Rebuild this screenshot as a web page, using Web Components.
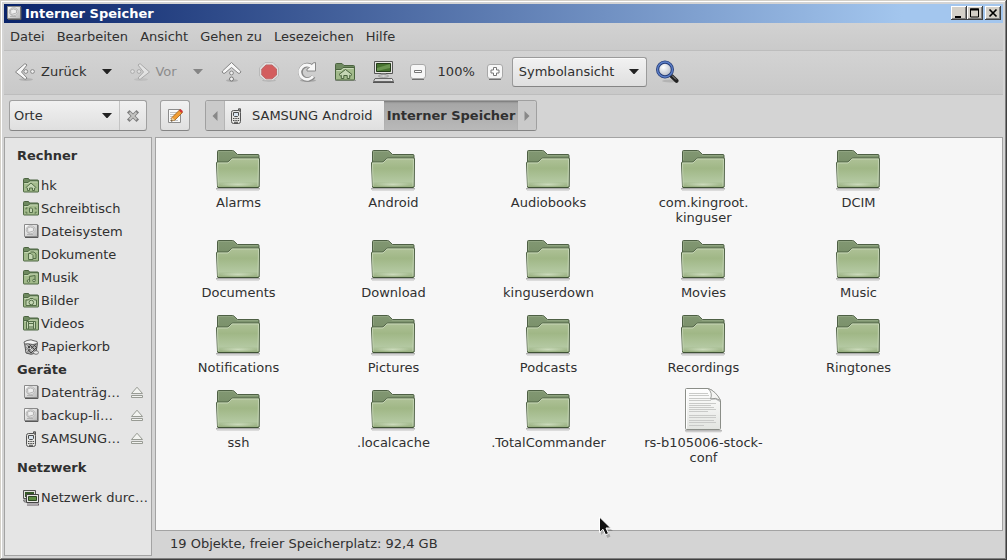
<!DOCTYPE html>
<html lang="de">
<head>
<meta charset="utf-8">
<title>Interner Speicher</title>
<style>
  body { margin: 0; font: 13px/15px "DejaVu Sans", sans-serif; color: #303030; background: #d4d4d4; }
</style>
</head>
<body>
<file-window>
  <title-bar slot="title">Interner Speicher</title-bar>
  <menu-bar slot="bars">
    <menu-entry>Datei</menu-entry><menu-entry>Bearbeiten</menu-entry><menu-entry>Ansicht</menu-entry><menu-entry>Gehen zu</menu-entry><menu-entry>Lesezeichen</menu-entry><menu-entry>Hilfe</menu-entry>
  </menu-bar>
  <tool-bar slot="bars"></tool-bar>
  <location-bar slot="bars"></location-bar>
  <side-pane slot="side">
    <side-heading class="after">Rechner</side-heading>
    <side-item icon="f-home">hk</side-item>
    <side-item icon="f-desk">Schreibtisch</side-item>
    <side-item icon="disk">Dateisystem</side-item>
    <side-item icon="f-docs">Dokumente</side-item>
    <side-item icon="f-music">Musik</side-item>
    <side-item icon="f-pics">Bilder</side-item>
    <side-item icon="f-video">Videos</side-item>
    <side-item icon="trash">Papierkorb</side-item>
    <side-heading>Geräte</side-heading>
    <side-item icon="disk" ejectable>Datenträg…</side-item>
    <side-item icon="disk" ejectable>backup-li…</side-item>
    <side-item icon="phone" ejectable>SAMSUNG…</side-item>
    <side-heading class="before after">Netzwerk</side-heading>
    <side-item icon="network">Netzwerk durc…</side-item>
  </side-pane>
  <icon-view slot="view">
    <file-item>Alarms</file-item>
    <file-item>Android</file-item>
    <file-item>Audiobooks</file-item>
    <file-item>com.kingroot.<br>kinguser</file-item>
    <file-item>DCIM</file-item>
    <file-item>Documents</file-item>
    <file-item>Download</file-item>
    <file-item>kinguserdown</file-item>
    <file-item>Movies</file-item>
    <file-item>Music</file-item>
    <file-item>Notifications</file-item>
    <file-item>Pictures</file-item>
    <file-item>Podcasts</file-item>
    <file-item>Recordings</file-item>
    <file-item>Ringtones</file-item>
    <file-item>ssh</file-item>
    <file-item>.localcache</file-item>
    <file-item>.TotalCommander</file-item>
    <file-item icon="document">rs-b105006-stock-<br>conf</file-item>
  </icon-view>
  <status-bar slot="status">19 Objekte, freier Speicherplatz: 92,4 GB</status-bar>
  <mouse-pointer slot="overlay"></mouse-pointer>
</file-window>

<script>
const define = (name, html, setup) => {
  const template = document.createElement('template');
  template.innerHTML = html;
  customElements.define(name, class extends HTMLElement {
    constructor() {
      super();
      this.attachShadow({ mode: 'open' }).append(template.content.cloneNode(true));
    }
    connectedCallback() { if (setup) setup(this, this.shadowRoot); }
  });
};

/* Icon set: [width, height, markup, viewBox x, viewBox y] */
const small = (emblem) => [16, 16, `
  <path d="M.5 14V2.500q0-1 1-1L5.500 1.500l1 1.500H14.500q1 0 1 1V14.500H1z" fill="#6f8a60" stroke="#4b6340"/>
  <path d="M.5 5.500H5l1.500-1.500h9V14.500q0 .5-.5 .5H1q-.5 0-.5-.5z" fill="#a3bb8c" stroke="#4f6944"/>
  <path d="M1.500 6.500H5.500L7 5h7.500" fill="none" stroke="#c5d6b4"/>
  <g fill="#c4d6b3" stroke="#556f49" stroke-width="1">${emblem}</g>`, 0, 1];
const ICONS = {
  folder: [48, 48, `
    <defs><linearGradient id="a" x2="0" y2="1"><stop stop-color="#afc298"/><stop offset=".35" stop-color="#a0b786"/><stop offset=".8" stop-color="#b3c8a1"/><stop offset="1" stop-color="#96ad7d"/></linearGradient>
    <linearGradient id="b" x2="0" y2="1"><stop stop-color="#829873"/><stop offset="1" stop-color="#6b8159"/></linearGradient>
    <radialGradient id="c"><stop stop-color="#dce8cf"/><stop offset="1" stop-color="#dce8cf" stop-opacity="0"/></radialGradient></defs>
    <path d="M2 41h44v1.500H2z" fill="#000" opacity=".3"/><path d="M3 43.500h42" stroke="#000" opacity=".1"/>
    <path d="M3.500 40V4.500q0-1 1-1H18.500q1 0 1.500 .7L23.500 7.500H44q1 0 1 1V40z" fill="url(#b)" stroke="#4e6045"/>
    <path d="M4.500 13V4.500H19L23 8.500H44" fill="none" stroke="#93a884" opacity=".8"/>
    <path d="M2.500 16q0-1 1-1H13q1 0 1.800-.8L17.500 11.700q.7-.7 1.700-.7H44.500q1 0 1 1L45 39.500q0 1-1 1H4.500q-1 0-1-1z" fill="url(#a)" stroke="#4e6045"/>
    <path d="M4 39L3.500 16H14l4-4H44.500L44 39" fill="none" stroke="#ccdabd" opacity=".8"/>
    <ellipse cx="24" cy="37.500" rx="18" ry="2.500" fill="url(#c)" opacity=".7"/><path d="M4 40.500h40" stroke="#3f5235"/>`, 1, 0],
  document: [48, 48, `
    <defs><linearGradient id="a" x2="0" y2="1"><stop stop-color="#fff"/><stop offset="1" stop-color="#e3e5e1"/></linearGradient></defs>
    <path d="M6 43h37v1.500H6z" fill="#000" opacity=".25"/><path d="M7 45h35" stroke="#000" opacity=".1"/>
    <path d="M6.500 2.500q0-1 1-1H29q7 2 12.500 12V41.500q0 1-1 1H7.500q-1 0-1-1z" fill="url(#a)" stroke="#8b8e88"/>
    <path d="M7.500 41.500V2.500H29" fill="none" stroke="#fff"/>
    <path d="M10 6.500H29M10 8.500H30M10 11.500H32M10 13.500H32M10 16.500H37M10 18.500H32M10 20.500H35M10 22.500H37M10 24.500H29M10 28.500H37M10 30.500H37M10 33.500H35M10 35.500H37M10 38.500H25" stroke="#c9cac8"/>
    <path d="M29 1.500Q34 6 31.500 12Q37 10 41.500 13.500Q37 4 29 1.500z" fill="#f5f5f3" stroke="#9b9d99"/><path d="M32 12Q37 11 41 14.500" stroke="#777" fill="none" opacity=".5"/>`, 1, 0],
  'f-home': small('<path d="M3 10.500L8 6l5 4.500-1 1-.5-.3V13.500h-2V11h-3v2.500h-2V11.200L4 11.500z"/>'),
  'f-desk': small('<path d="M3 8h1.500M3 8v1.500M13 8h-1.500M13 8v1.500M3 13h1.500M3 13v-1.500M13 13h-1.500M13 13v-1.500" fill="none"/><path d="M6.500 8h2l1 1v3.500h-3z"/>'),
  'f-docs': small('<path d="M7.500 6H11l2 2v4.500H9" fill="none"/><path d="M5.500 7.500H8l2 2v4h-4.500z"/>'),
  'f-music': small('<path d="M6.500 12V7.500L12 6.500V11" fill="none"/><circle cx="5.500" cy="12" r="1.300"/><circle cx="11" cy="11.500" r="1.300"/>'),
  'f-pics': small('<path d="M3 8h2.500L7 6.500h3L11.500 8H13.500v5.500H3z"/><circle cx="8.300" cy="10.500" r="2.300"/>'),
  'f-video': small('<path d="M3.500 6.500h9v7.500h-9zM5.500 6.500V14M10.500 6.500V14M5.500 8.500h5v3.500h-5z"/>'),
  disk: [16, 16, `
    <defs><linearGradient id="a" x2="1" y2="1"><stop stop-color="#fff"/><stop offset="1" stop-color="#b8b8b8"/></linearGradient></defs>
    <path d="M1.500 1.500h13v12h-13z" fill="url(#a)" stroke="#8a8a8a"/><path d="M2 14.500h13V2" fill="none" stroke="#585858"/>
    <ellipse cx="7.700" cy="6.700" rx="4.500" ry="4" fill="#dedede" stroke="#bbb"/><path d="M4.500 5q3-2 6 0v3L5 9.500zM4 11.500h6" fill="#eee" stroke="#aaa" stroke-width=".8"/>`, 0, 1],
  trash: [16, 16, `
    <path d="M1.500 4L3 14q5 2.500 10 0l1.500-10z" fill="#aaa" stroke="#555"/>
    <path d="M3 5l9 9M3 8l5 6M6 5l7 7M10 5l4 4M13 5l-9 8M9 5L3 11M14 8l-6 6" stroke="#444"/><path d="M4 5v8M7 9l4 4" stroke="#ddd"/>
    <path d="M1 3L4 1.500 8 .8l3 1 3 .7.5 2L10 5.500 5 4.800 1.500 5z" fill="#f3f3f3" stroke="#666"/>
    <ellipse cx="13" cy="13.500" rx="2.500" ry="1.800" fill="#e8e8e8" stroke="#777"/>`],
  phone: [16, 16, `
    <path d="M10.500 3V.8h2V4" fill="#999" stroke="#555"/><rect x="3.500" y="2.500" width="9" height="13" rx="2" fill="#e4e4e1" stroke="#555"/>
    <path d="M5.500 4.500h5v3l-1 1h-3l-1-1z" fill="#d8e4ef" stroke="#4c4c4c"/>
    <path d="M5 10.500h1.500M7.300 10.500h1.500M9.600 10.500h1.500M5 12.500h1.500M7.300 12.500h1.500M9.600 12.500h1.500M6 14.300h4" stroke="#4c4c4c"/>`],
  network: [16, 16, `
    <path d="M.5 .5h12v8H.5z" fill="#e2e2df" stroke="#555"/><path d="M2 2h9v5H2z" fill="#355826"/><path d="M.5 10h3v2h-2z" fill="#ddd" stroke="#666"/>
    <path d="M3.500 4.500h12v8h-12z" fill="#e8e8e5" stroke="#444"/><path d="M5.500 6.500h8v4h-8z" fill="#5d8d42" stroke="#2d4722"/><path d="M4 14.500h12" stroke="#625860" stroke-width="2"/><path d="M4 14.200h11" stroke="#ccc"/>`],
  eject: [16, 16, `<g fill="#f2f3f0" stroke="#989b94"><path d="M8 2.200L13.500 8.500h-11z"/><path d="M2.500 10.500h11v2h-11z"/></g>`],
  back: [24, 24, `
    <ellipse cx="13" cy="19.500" rx="7" ry="1.500" fill="#000" opacity=".13"/>
    <path d="M11.500 4Q13 3.500 14 5L8.500 12l5.500 6q-1 2-2.500 1L2.500 12z" fill="#f7f7f7" stroke="#858585"/>
    <circle cx="12.800" cy="11.500" r="1.900" fill="#f0f0f0" stroke="#888"/><circle cx="19.500" cy="11.500" r="1.900" fill="#f0f0f0" stroke="#888"/>`],
  forward: [24, 24, `<g opacity=".5"><ellipse cx="13" cy="19.500" rx="7" ry="1.500" fill="#000" opacity=".13"/>
    <path d="M12.500 4Q11 3.500 10 5l5.500 7-5.500 6q1 2 2.500 1L21.500 12z" fill="#f7f7f7" stroke="#858585"/>
    <circle cx="4.500" cy="11.500" r="1.900" fill="#f0f0f0" stroke="#888"/><circle cx="11" cy="11.500" r="1.900" fill="#f0f0f0" stroke="#888"/></g>`],
  up: [24, 24, `
    <ellipse cx="13" cy="20.500" rx="6" ry="1.500" fill="#000" opacity=".15"/>
    <path d="M12.500 2.500L21.500 11q1 1-.5 2-1 1-2 0L12.500 7.500 6 13q-1 1-2 0-1.500-1-.5-2z" fill="#f7f7f7" stroke="#858585"/>
    <circle cx="12.500" cy="13" r="1.900" fill="#f0f0f0" stroke="#888"/><circle cx="12.500" cy="19" r="2" fill="#f0f0f0" stroke="#777"/>`],
  stop: [24, 24, `
    <ellipse cx="12" cy="20.500" rx="7" ry="1.200" fill="#000" opacity=".12"/>
    <path d="M8 2.500h8l5.500 5.500v8L16 20.500H8L2.500 16V8z" fill="#dedede" stroke="#b9b9b9"/>
    <path d="M9 5h6l4.500 4v6L15 18.800H9L4.800 15V9z" fill="#d35d5e" stroke="#bf6667"/>`],
  reload: [24, 24, `
    <ellipse cx="13" cy="20.500" rx="8" ry="1.500" fill="#000" opacity=".18"/>
    <path d="M18.500 16.500A7.200 7.200 0 1 1 17 6.500" fill="none" stroke="#888" stroke-width="4.600"/><path d="M20.500 2.500v8.500h-8.500v-2L14.500 7.500 18 3z" fill="#f7f7f7" stroke="#888"/>
    <path d="M18 16.200A7.200 7.200 0 1 1 17 7l2 1" fill="none" stroke="#f7f7f7" stroke-width="2.800"/>`],
  home: [24, 24, `
    <path d="M2 20.500h21" stroke="#000" opacity=".25"/>
    <path d="M2.500 19V4.500q0-1 1-1h5.500l2 2H20.500q1 0 1 1V19z" fill="#6f8a60" stroke="#4b6340"/>
    <path d="M2.500 9.500H8l2-2H21.500V19q0 1-1 1h-17q-1 0-1-1z" fill="#a3bb8c" stroke="#4a643e"/><path d="M3.500 10.500H8.500l2-2h10" fill="none" stroke="#c9d9b9"/>
    <path d="M6 14.500L12.500 9.500 19 14.500l-1.500 1.300-.8-.5V18.500h-2.500V15.500h-3.400V18.500H8.300V15.300l-.8.5z" fill="#c5d6b4" stroke="#4a643e"/>`],
  computer: [24, 24, `
    <path d="M3.500 1.500h18v12h-18z" fill="#e6e6e3" stroke="#555"/><path d="M5.500 3.500h14v8h-14z" fill="#46722f" stroke="#243c19"/><path d="M6 8L19 4v4L6 11z" fill="#7aa45f" opacity=".7"/>
    <path d="M10 13.500h5v2.500h-5z" fill="#999"/><ellipse cx="12.500" cy="16" rx="5" ry="1.200" fill="#f2f2f2" stroke="#888"/>
    <path d="M4 18.500h17l1.500 3h-20z" fill="#f3f3f3" stroke="#666"/><path d="M4.500 20h15" stroke="#888" stroke-dasharray="1 1"/><path d="M2 22.500h21" stroke="#555"/>`],
  minus: [16, 16, `<rect x=".5" y=".5" width="15" height="14" rx="2.500" fill="#f6f6f6" stroke="#a8a8a8"/><path d="M2 15.500h12" stroke="#6f6f6f"/><path d="M4.500 6.500h7v2h-7z" fill="#fff" stroke="#777"/>`],
  plus: [16, 16, `<rect x=".5" y=".5" width="15" height="14" rx="2.500" fill="#f6f6f6" stroke="#a8a8a8"/><path d="M2 15.500h12" stroke="#6f6f6f"/><path d="M6.500 3.500h3v2.500h2.500v3h-2.500v2.500h-3V9H4V6h2.500z" fill="#fff" stroke="#777"/>`],
  search: [24, 24, `
    <defs><radialGradient id="a" cx=".4" cy=".35"><stop stop-color="#fff"/><stop offset="1" stop-color="#c5c9d2"/></radialGradient></defs>
    <ellipse cx="15" cy="21" rx="8" ry="1.500" fill="#000" opacity=".12"/>
    <path d="M16.500 16L21.500 20.800" stroke="#222" stroke-width="4" stroke-linecap="round"/><path d="M17 15.500L21 19.500" stroke="#999" stroke-width="1"/>
    <circle cx="10" cy="9.500" r="7.400" fill="url(#a)" stroke="#263d78" stroke-width="3.200"/><circle cx="10" cy="9.500" r="7.500" fill="none" stroke="#5c7fc8" stroke-width="1.400"/>`],
  close: [16, 16, `<path d="M4.500 4.500l7 7M11.500 4.500l-7 7" stroke="#808080" stroke-width="3.600" stroke-linecap="square"/><path d="M4.500 4.500l7 7M11.500 4.500l-7 7" stroke="#c4c4c2" stroke-width="1.800"/>`],
  edit: [16, 16, `
    <path d="M1.500 1.500h12v13h-12z" fill="#fafafa" stroke="#8c8c8c"/><path d="M3 4.500h7M3 6.500h6M3 8.500h4M3 10.500h3M3 12.500h8" stroke="#c2c2c2"/>
    <path d="M4 13l1-3.500L12.500 2l3 2.500L8 12z" fill="#f09c33" stroke="#9a5d18" stroke-width=".8"/><path d="M12 2.500L13.500 1l2.500 2.200L14.500 5z" fill="#cf3535"/><path d="M4 13l1-3.500L8 12z" fill="#e8cfa0"/><path d="M4 13.500l.7-1.500 1 .9z" fill="#111"/>`],
  down: [10, 6, `<path d="M0 0h10L5.500 5h-1z" fill="currentColor"/>`],
  left: [6, 10, `<path d="M5.500 0v10L.5 5z" fill="currentColor"/>`],
  right: [6, 10, `<path d="M.5 0v10l5-5z" fill="currentColor"/>`],
  pointer: [16, 22, `
    <path d="M3 4v15l3.500-3 3 6 3-1.500-2.500-5.500h5z" fill="#000" opacity=".2"/>
    <path d="M1.500 1v15.500l3.500-3.200 2.500 5.500 3-1.300-2.500-5.500h4.700z" fill="#111" stroke="#fff"/>`],
  minimize: [10, 10, `<path d="M1 8h6v2H1z"/>`],
  maximize: [10, 10, `<path d="M.5 1h8v8h-8z" fill="none" stroke="#000"/><path d="M0 1.500h9" stroke="#000" stroke-width="2"/>`],
  quit: [10, 10, `<path d="M1.500 1.500l7 7M8.500 1.500l-7 7" stroke="#000" stroke-width="1.700"/>`]
};
define('ui-icon', `<style>:host { display: inline-flex; flex: none; } svg { display: block; }</style><span></span>`, (host, root) => {
  const [w, h, markup, x = 0, y = 0] = ICONS[host.getAttribute('name')];
  root.querySelector('span').innerHTML = `<svg width="${w}" height="${h}" viewBox="${x} ${y} ${w} ${h}" aria-hidden="true">${markup}</svg>`;
});

define('file-window', `<style>
  :host { display: flex; flex-direction: column; position: relative; box-sizing: border-box; min-height: 100vh; padding: 4px; background: #d4d4d4;
    box-shadow: inset -1px -1px #404040, inset 1px 1px #d4d0c8, inset -2px -2px #808080, inset 2px 2px #fff; }
  main { flex: 1; display: grid; grid-template-columns: 148px minmax(0, 1fr); column-gap: 3px; }
  section { display: flex; flex-direction: column; }
</style>
<slot name="title"></slot><slot name="bars"></slot>
<main><slot name="side"></slot><section><slot name="view"></slot><slot name="status"></slot></section></main>
<slot name="overlay"></slot>`);

define('title-bar', `<style>
  :host { display: flex; align-items: center; height: 19px; padding: 0 2px; background: linear-gradient(90deg, #0a246a, #a3c6ee 90%); color: #fff; font-weight: bold; }
  h1 { flex: 1; margin: 0 0 0 3px; font: inherit; }
  button { display: flex; justify-content: center; align-items: center; width: 16px; height: 14px; padding: 0; border: 0; background: #d4d0c8;
    box-shadow: inset -1px -1px #404040, inset 1px 1px #fff, inset -2px -2px #808080; margin-bottom: 1px; }
  .quit { margin-left: 2px; }
</style>
<ui-icon name="disk"></ui-icon><h1><slot></slot></h1>
<button aria-label="Minimieren"><ui-icon name="minimize"></ui-icon></button><button aria-label="Maximieren"><ui-icon name="maximize"></ui-icon></button><button class="quit" aria-label="Schließen"><ui-icon name="quit"></ui-icon></button>`);

define('menu-bar', `<style>
  :host { display: block; background: linear-gradient(#d2d2d2, #cacaca); border-bottom: 1px solid #bdbdbd; }
  nav { display: flex; height: 27px; align-items: center; gap: 12px; padding-left: 6px; }
</style><nav><slot></slot></nav>`);
define('menu-entry', `<style>
  :host { display: block; }
  button { display: block; border: 0; padding: 0; background: none; font: inherit; color: inherit; }
</style><button><slot></slot></button>`);

define('tool-bar', `<style>
  :host { display: flex; align-items: center; height: 41px; padding: 0 0 2px 9px; background: linear-gradient(#d3d3d3, #c9c9c9); border-bottom: 1px solid #bdbdbd; }
  button { display: flex; align-items: center; border: 0; padding: 0; background: none; font: inherit; color: inherit; }
  .back { gap: 4px; } .forward { gap: 3px; color: #8c8c8c; }
  .drop { margin: 0 16px; color: #222; } .drop.off { color: #858585; }
  .set { display: flex; gap: 14px; }
  .zoom { display: flex; align-items: center; gap: 12px; margin: 0 9px 0 15px; }
  .pick { display: grid; align-items: center; margin-right: 8px; }
  .pick > * { grid-area: 1 / 1; }
  .pick ui-icon { justify-self: end; margin-right: 8px; color: #222; pointer-events: none; }
  select { appearance: none; width: 135px; height: 30px; padding: 0 6px; border: 1px solid #9b9b9b; border-bottom-color: #858585; border-radius: 3px;
    background: linear-gradient(#f2f2f2, #dfdfdf); font: inherit; color: inherit; box-shadow: inset 0 1px #fafafa; }
</style>
<button class="back"><ui-icon name="back"></ui-icon>Zurück</button>
<button class="drop" aria-label="Verlauf zurück"><ui-icon name="down"></ui-icon></button>
<button class="forward" disabled><ui-icon name="forward"></ui-icon>Vor</button>
<button class="drop off" aria-label="Verlauf vor" disabled><ui-icon name="down"></ui-icon></button>
<div class="set">
  <button aria-label="Hinauf"><ui-icon name="up"></ui-icon></button>
  <button aria-label="Anhalten"><ui-icon name="stop"></ui-icon></button>
  <button aria-label="Neu laden"><ui-icon name="reload"></ui-icon></button>
  <button aria-label="Persönlicher Ordner"><ui-icon name="home"></ui-icon></button>
  <button aria-label="Rechner"><ui-icon name="computer"></ui-icon></button>
</div>
<div class="zoom"><button aria-label="Verkleinern"><ui-icon name="minus"></ui-icon></button><span>100%</span><button aria-label="Vergrößern"><ui-icon name="plus"></ui-icon></button></div>
<div class="pick"><select aria-label="Ansicht"><option>Symbolansicht</option></select><ui-icon name="down"></ui-icon></div>
<button aria-label="Suchen"><ui-icon name="search"></ui-icon></button>`);

define('location-bar', `<style>
  :host { display: flex; align-items: center; height: 41px; padding: 0 0 1px 5px; }
  button { display: flex; align-items: center; justify-content: center; box-sizing: border-box; border: 0; padding: 0; font: inherit; color: inherit; background: none; }
  .box, .path { display: flex; box-sizing: border-box; height: 31px; border: 1px solid #a0a0a0; border-bottom-color: #858585; border-radius: 3px; overflow: hidden; background: linear-gradient(#f1f1f1, #dfdfdf); }
  .places { width: 138px; margin-right: 13px; }
  .pick { flex: 1; display: grid; align-items: center; }
  .pick > * { grid-area: 1 / 1; }
  .pick ui-icon { justify-self: end; margin-right: 7px; color: #222; pointer-events: none; }
  select { appearance: none; border: 0; height: 29px; padding: 0 4px; background: none; font: inherit; color: inherit; }
  .x { width: 27px; border-left: 1px solid #c4c4c4; }
  .edit { width: 30px; margin-right: 15px; }
  .edit button { flex: 1; }
  .arrow { width: 18px; background: #cacaca; color: #888; }
  .device { width: 160px; gap: 8px; justify-content: flex-start; padding-left: 3px; border-left: 1px solid #b5b5b5; }
  .current { width: 134px; font-weight: bold; background: linear-gradient(#a5a5a5, #b9b9b9); box-shadow: inset 0 2px 2px -1px #777; }
</style>
<div class="box places"><div class="pick"><select aria-label="Seitenleiste"><option>Orte</option></select><ui-icon name="down"></ui-icon></div><button class="x" aria-label="Seitenleiste schließen"><ui-icon name="close"></ui-icon></button></div>
<div class="box edit"><button aria-label="Adresse bearbeiten"><ui-icon name="edit"></ui-icon></button></div>
<div class="path"><button class="arrow" aria-label="Nach links"><ui-icon name="left"></ui-icon></button><button class="device"><ui-icon name="phone"></ui-icon>SAMSUNG Android</button><button class="current">Interner Speicher</button><button class="arrow" aria-label="Nach rechts"><ui-icon name="right"></ui-icon></button></div>`);

define('side-pane', `<style>
  :host { display: block; border: 1px solid #a3a3a3; background: #e5e5e5; padding-top: 6px; overflow: hidden; }
</style><slot></slot>`);
define('side-heading', `<style>
  :host { display: block; padding-left: 12px; line-height: 23px; }
  :host(.after) { margin-bottom: 7px; } :host(.before) { margin-top: 6px; }
  h2 { margin: 0; font: inherit; font-weight: bold; }
</style><h2><slot></slot></h2>`);
define('side-item', `<style>
  :host { display: flex; align-items: center; height: 23px; padding: 0 6px 0 18px; }
  a { flex: 1; display: flex; align-items: center; gap: 2px; color: inherit; text-decoration: none; white-space: nowrap; }
  button { display: flex; border: 0; padding: 0; background: none; }
  button[hidden] { display: none; }
</style><a href="#"><span><slot></slot></span></a><button aria-label="Auswerfen" hidden><ui-icon name="eject"></ui-icon></button>`, (host, root) => {
  const icon = document.createElement('ui-icon');
  icon.setAttribute('name', host.getAttribute('icon'));
  root.querySelector('a').prepend(icon);
  root.querySelector('button').hidden = !host.hasAttribute('ejectable');
});

define('icon-view', `<style>
  :host { flex: 1; display: grid; grid-template-columns: repeat(auto-fill, 155px); align-content: start; row-gap: 12px; padding: 9px 0 9px 5px; background: #f7f7f7; border: 1px solid #a3a3a3; }
</style><slot></slot>`);
define('file-item', `<style>
  :host { display: flex; flex-direction: column; align-items: center; text-align: center; }
</style><span><slot></slot></span>`, (host, root) => {
  const icon = document.createElement('ui-icon');
  icon.setAttribute('name', host.getAttribute('icon') || 'folder');
  root.querySelector('span').before(icon);
});
define('status-bar', `<style>:host { display: block; padding: 5px 15px; }</style><slot></slot>`);
define('mouse-pointer', `<style>:host { position: absolute; left: 598px; top: 516px; pointer-events: none; }</style><ui-icon name="pointer"></ui-icon>`);
</script>
</body>
</html>
